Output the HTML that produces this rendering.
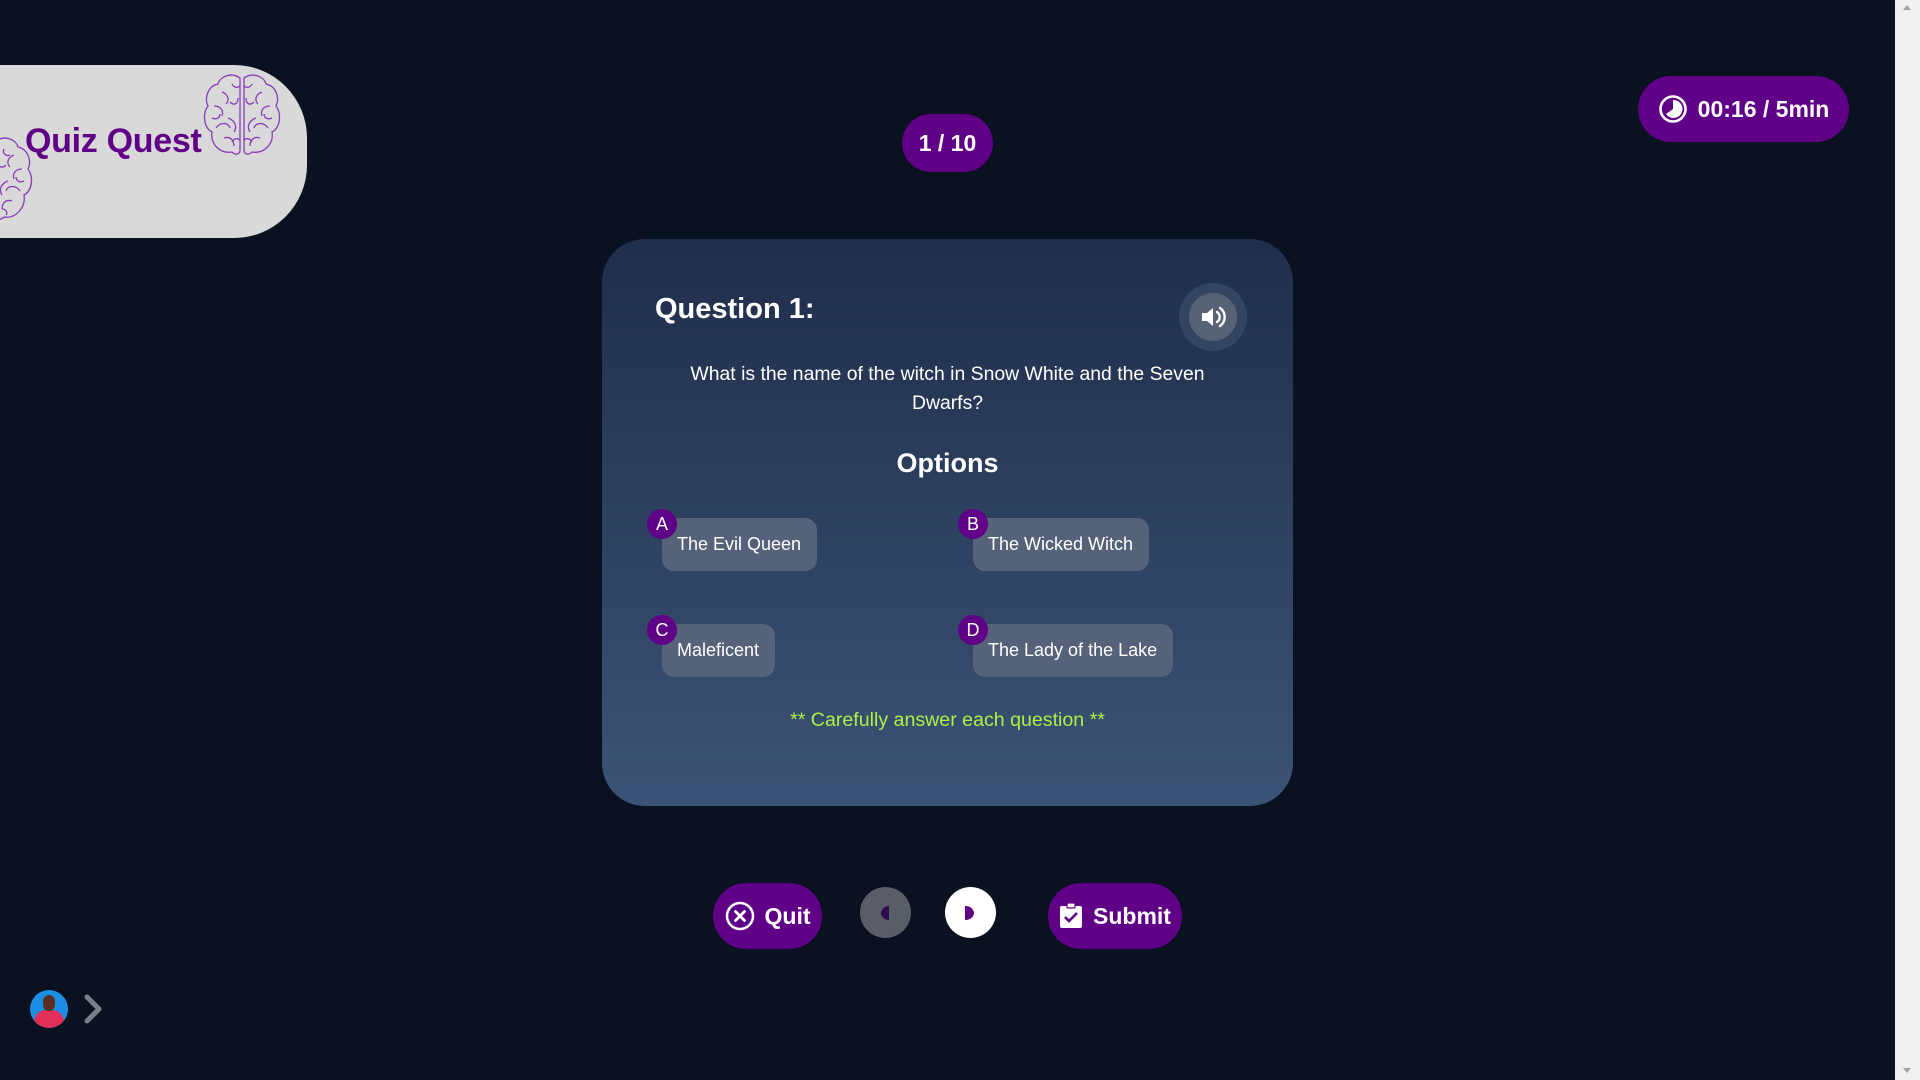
<!DOCTYPE html>
<html><head><meta charset="utf-8"><style>
*{margin:0;padding:0;box-sizing:border-box}
body{width:1920px;height:1080px;background:#0a1120;font-family:"Liberation Sans",Arial,sans-serif;position:relative;overflow:hidden;color:#fff}
.abs{position:absolute}
.logo{left:0;top:65px;width:307px;height:173px;background:#d9d9d9;border-radius:0 73px 73px 0;overflow:hidden}
.logo .t{position:absolute;left:25px;top:59px;font-size:34px;font-weight:bold;color:#5f0087;line-height:1;letter-spacing:-0.3px}
.pill{background:#5f0087;border-radius:40px;font-weight:bold;display:flex;align-items:center;justify-content:center}
.card{left:602px;top:239px;width:691px;height:567px;border-radius:43px;background:linear-gradient(#1f2e4b,#3b5376)}
.opt{position:absolute;height:53px;background:#566279;border-radius:12px;font-size:18px;line-height:53px;padding-left:15px}
.badge{position:absolute;left:-15px;top:-9px;width:30px;height:30px;border-radius:50%;background:#5f0087;font-size:18px;line-height:30px;text-align:center}
.scroll{left:1895px;top:0;width:25px;height:1080px;background:#f0f0f0}
</style></head><body>
<div class="abs logo">
 <div class="t">Quiz Quest</div>
 <svg class="abs" style="left:202px;top:7px" width="80" height="88" viewBox="0 0 80 88" fill="none" stroke="#8a3bb8" stroke-width="1.3">
  <path d="M38 6C30 0 18 4 16 12 6 14 2 26 6 34 0 42 2 56 10 60 8 72 18 82 30 80 34 84 38 82 38 78Z"/>
  <path d="M42 6C50 0 62 4 64 12 74 14 78 26 74 34 80 42 78 56 70 60 72 72 62 82 50 80 46 84 42 82 42 78Z"/>
  <path d="M20 20c6 2 8 8 4 12M12 34c6 0 10 4 8 10M14 56c4-6 12-6 14 0M28 30c4 4 8 2 8-4M26 46c6 2 10 8 6 14M22 66c6-2 10 2 10 8M30 12c2 4 6 4 8 2M10 46c4 2 8 0 8-4M30 70c2-4 6-4 8-2"/>
  <path d="M60 20c-6 2-8 8-4 12M68 34c-6 0-10 4-8 10M66 56c-4-6-12-6-14 0M52 30c-4 4-8 2-8-4M54 46c-6 2-10 8-6 14M58 66c-6-2-10 2-10 8M50 12c-2 4-6 4-8 2M70 46c-4 2-8 0-8-4M50 70c-2-4-6-4-8-2"/>
 </svg>
 <svg class="abs" style="left:-46px;top:70px" width="80" height="92" viewBox="0 0 80 92" fill="none" stroke="#8a3bb8" stroke-width="1.3">
  <path d="M42 6C50 0 62 4 64 12 74 14 78 26 74 34 80 42 78 56 70 60 72 72 62 84 50 82 46 86 42 84 42 78Z"/>
  <path d="M60 20c-6 2-8 8-4 12M68 34c-6 0-10 4-8 10M66 56c-4-6-12-6-14 0M52 30c-4 4-8 2-8-4M54 46c-6 2-10 8-6 14M58 66c-6-2-10 2-10 8M70 46c-4 2-8 0-8-4M50 14c-2 4 2 8 6 6M48 74c4 0 6 4 4 6"/>
 </svg>
</div>
<div class="abs pill" style="left:902px;top:114px;width:91px;height:58px;font-size:23px">1 / 10</div>
<div class="abs pill" style="left:1638px;top:76px;width:211px;height:66px;font-size:23px">
 <svg width="30" height="30" viewBox="0 0 30 30" style="margin-right:10px"><circle cx="15" cy="15" r="12.5" fill="none" stroke="#fff" stroke-width="2.6"/><path d="M15 6A9 9 0 1 1 8 20 L15 15Z" fill="#fff"/></svg>00:16 / 5min</div>

<div class="abs card">
 <div class="abs" style="left:53px;top:54px;font-size:29px;font-weight:bold">Question 1:</div>
 <div class="abs" style="left:577px;top:44px;width:68px;height:68px;border-radius:50%;background:#344563"></div>
 <div class="abs" style="left:587px;top:54px;width:48px;height:48px;border-radius:50%;background:#586276"></div>
 <svg class="abs" style="left:597px;top:64px" width="28" height="28" viewBox="0 0 28 28"><path d="M3 10h5l6-5v18l-6-5H3z" fill="#fff"/><path d="M18 9a6 6 0 0 1 0 10M21 5a11 11 0 0 1 0 18" stroke="#fff" stroke-width="2.4" fill="none" stroke-linecap="round"/></svg>
 <div class="abs" style="left:80px;top:121px;width:531px;text-align:center;font-size:19.4px;line-height:29px">What is the name of the witch in Snow White and the Seven Dwarfs?</div>
 <div class="abs" style="left:0;top:209px;width:691px;text-align:center;font-size:27px;font-weight:bold">Options</div>
 <div class="opt" style="left:60px;top:279px;width:155px"><div class="badge">A</div>The Evil Queen</div>
 <div class="opt" style="left:371px;top:279px;width:176px"><div class="badge">B</div>The Wicked Witch</div>
 <div class="opt" style="left:60px;top:385px;width:113px"><div class="badge">C</div>Maleficent</div>
 <div class="opt" style="left:371px;top:385px;width:200px"><div class="badge">D</div>The Lady of the Lake</div>
 <div class="abs" style="left:0;top:470px;width:691px;text-align:center;font-size:19.6px;color:#adf045">** Carefully answer each question **</div>
</div>

<div class="abs pill" style="left:713px;top:883px;width:109px;height:66px;font-size:23px">
 <svg width="30" height="30" viewBox="0 0 30 30" style="margin-right:10px"><circle cx="15" cy="15" r="13" fill="none" stroke="#fff" stroke-width="2.5"/><path d="M10.5 10.5l9 9M19.5 10.5l-9 9" stroke="#fff" stroke-width="2.8" stroke-linecap="round"/></svg>Quit</div>
<div class="abs" style="left:860px;top:887px;width:51px;height:51px;border-radius:50%;background:#585d66"></div>
<svg class="abs" style="left:876px;top:903px" width="20" height="20" viewBox="0 0 20 20"><path d="M13 3v14c-5 0-8-4-8-7s3-7 8-7z" fill="#2e0b4f"/></svg>
<div class="abs" style="left:945px;top:887px;width:51px;height:51px;border-radius:50%;background:#fff"></div>
<svg class="abs" style="left:960px;top:903px" width="20" height="20" viewBox="0 0 20 20"><path d="M5 3v14c6 0 9-4 9-7s-3-7-9-7z" fill="#5f0087"/></svg>
<div class="abs pill" style="left:1048px;top:883px;width:134px;height:66px;font-size:23px">
 <svg width="24" height="26" viewBox="0 0 24 26" style="margin-right:10px"><rect x="1" y="3" width="22" height="22" rx="2" fill="#fff"/><rect x="8" y="0" width="8" height="5" rx="1" fill="#fff" stroke="#5f0087" stroke-width="1.2"/><path d="M6 14l4 4 8-8" stroke="#5f0087" stroke-width="2.6" fill="none"/></svg>Submit</div>

<div class="abs" style="left:30px;top:990px;width:38px;height:38px;border-radius:50%;background:#1a8fe6;overflow:hidden">
 <div class="abs" style="left:4px;top:20px;width:30px;height:20px;border-radius:12px 12px 0 0;background:#e0305a"></div>
 <div class="abs" style="left:13px;top:5px;width:12px;height:16px;border-radius:6px;background:#5a2e20"></div>
</div>
<svg class="abs" style="left:82px;top:993px" width="24" height="32" viewBox="0 0 24 32"><path d="M5 4l12 12-12 12" stroke="#7a7f88" stroke-width="5" fill="none" stroke-linecap="round" stroke-linejoin="round"/></svg>

<div class="abs scroll"></div>
<svg class="abs" style="left:1900px;top:2px" width="14" height="10"><path d="M3 8l4-5 4 5z" fill="#a3a3a3"/></svg>
<svg class="abs" style="left:1900px;top:1066px" width="14" height="10"><path d="M3 2l4 5 4-5z" fill="#a3a3a3"/></svg>
</body></html>
